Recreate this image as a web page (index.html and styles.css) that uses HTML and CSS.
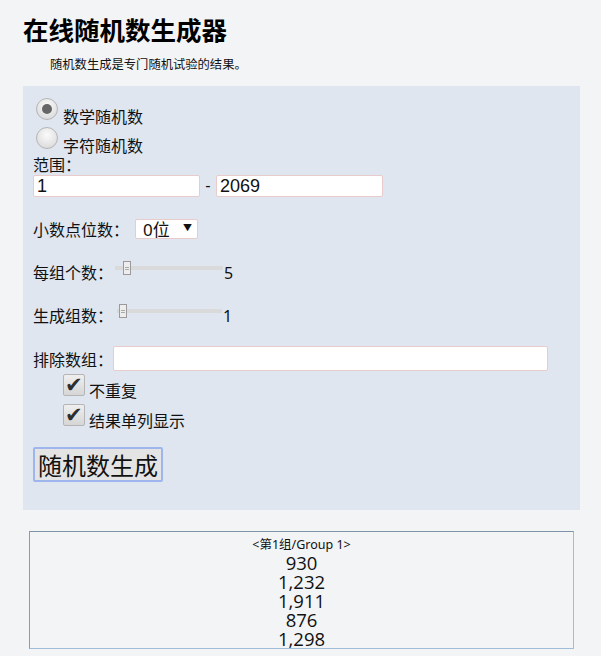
FILE: index.html
```html
<!DOCTYPE html>
<html lang="zh-CN">
<head>
    <meta charset="UTF-8">
    <title>在线随机数生成器</title>
    <link rel="stylesheet" href="styles.css">
</head>
<body>
    <h1>在线随机数生成器</h1>
    <p class="desc">随机数生成是专门随机试验的结果。</p>

    <div class="panel">
        <label class="radio-row"><input type="radio" name="kind" class="radio" checked>数学随机数</label>
        <label class="radio-row"><input type="radio" name="kind" class="radio">字符随机数</label>
        <div class="range-label">范围：</div>
        <div class="range">
            <input type="text" class="text-in" value="1">
            <span class="dash">-</span>
            <input type="text" class="text-in" value="2069">
        </div>

        <div class="row">
            <span class="label">小数点位数：</span>
            <span class="select">0位 <span class="arrow">▼</span></span>
        </div>
        <div class="row">
            <span class="label">每组个数：</span>
            <span class="slider"><span class="thumb thumb-a"></span></span>
            <span class="val">5</span>
        </div>
        <div class="row">
            <span class="label">生成组数：</span>
            <span class="slider slider-b"><span class="thumb thumb-b"></span></span>
            <span class="val">1</span>
        </div>
        <div class="row exclude">
            <span class="label">排除数组：</span>
            <input type="text" class="text-in wide">
        </div>
        <label class="check-row"><span class="box">✔</span>不重复</label>
        <label class="check-row"><span class="box">✔</span>结果单列显示</label>

        <button class="go">随机数生成</button>
    </div>

    <div class="result">
        <div class="group-title">&lt;第1组/Group 1&gt;</div>
        <div class="num">930</div>
        <div class="num">1,232</div>
        <div class="num">1,911</div>
        <div class="num">876</div>
        <div class="num">1,298</div>
    </div>
</body>
</html>
```

FILE: styles.css
```css
body {
    margin: 0;
    padding: 0 21px 0 23px;
    background: #f3f4f6;
    color: #111;
    font-family: "Noto Sans", "Noto Sans CJK SC", sans-serif;
}
h1 {
    margin: 0;
    padding-top: 13px;
    font-size: 25.5px;
    line-height: 34px;
    font-weight: bold;
    color: #000;
}
.desc {
    margin: 9px 0 0 27px;
    font-size: 12.3px;
    line-height: 18px;
}
.panel {
    margin-top: 12px;
    background: #e0e6ef;
    padding: 12px 10px 28px 10px;
    font-size: 16px;
}
.radio-row {
    display: flex;
    align-items: flex-end;
    height: 29px;
    padding-left: 3px;
    line-height: 20px;
}
.radio {
    appearance: none;
    align-self: flex-start;
    width: 22px;
    height: 22px;
    margin: 0 5px 0 0;
    border-radius: 50%;
    border: 1px solid #b5b5b5;
    background: radial-gradient(circle at 50% 35%, #fbfbfb, #d4d4d4);
    position: relative;
}
.radio:checked::after {
    content: "";
    position: absolute;
    left: 5px;
    top: 5px;
    width: 10px;
    height: 10px;
    border-radius: 50%;
    background: #666;
}
.range-label {
    line-height: 18px;
}
.range {
    display: flex;
    align-items: center;
    margin-top: 1px;
}
.text-in {
    box-sizing: border-box;
    width: 167px;
    height: 22px;
    border: 1px solid #e8cccc;
    border-radius: 2px;
    background: #fff;
    padding: 0 3px;
    font: 18px "Liberation Sans", Arial, sans-serif;
    color: #111;
    outline: none;
}
.dash {
    width: 16px;
    text-align: center;
    font-family: "Liberation Sans", sans-serif;
}
.row {
    display: flex;
    align-items: center;
    margin-top: 20px;
    height: 23px;
}
.row + .row {
    margin-top: 20px;
}
.label {
    margin-right: 2px;
}
.select {
    box-sizing: border-box;
    display: inline-block;
    width: 63px;
    height: 20px;
    margin-left: 4px;
    padding-left: 7px;
    border: 1px solid #e8cccc;
    border-radius: 2px;
    background: #fff;
    line-height: 20px;
    font-size: 17px;
    position: relative;
}
.arrow {
    position: absolute;
    right: 5px;
    top: -2px;
    font-size: 9px;
}
.slider {
    position: relative;
    width: 108px;
    height: 4px;
    background: #dadada;
    margin-top: -7px;
}
.slider-b {
    width: 105px;
    margin-left: 2px;
}
.thumb {
    position: absolute;
    top: -5px;
    width: 8px;
    height: 14px;
    border: 1px solid #9a9a9a;
    background: #ededed;
    box-sizing: border-box;
}
.thumb::after {
    content: "";
    position: absolute;
    left: 1px;
    top: 5px;
    width: 4px;
    height: 1px;
    border-top: 1px solid #aaa;
    border-bottom: 1px solid #aaa;
}
.thumb-a {
    left: 8px;
}
.thumb-b {
    left: 2px;
}
.val {
    margin-left: 1px;
    font-size: 16px;
    padding-top: 2px;
}
.exclude {
    margin-top: 17px;
    height: 25px;
}
.exclude .label {
    margin-right: 0;
}
.wide {
    width: 435px;
    height: 25px;
}
.check-row {
    display: flex;
    align-items: flex-end;
    padding-left: 30px;
    height: 30px;
    line-height: 20px;
}
.check-row:first-of-type {
    margin-top: 2px;
}
.box {
    box-sizing: border-box;
    align-self: flex-start;
    margin-top: 3px;
    width: 22px;
    height: 22px;
    margin-right: 4px;
    border: 1px solid #b5b5b5;
    border-radius: 2px;
    background: linear-gradient(#efefef, #d6d6d6);
    color: #2e2e2e;
    font-size: 21px;
    line-height: 19px;
    text-align: center;
}
.go {
    margin-top: 16px;
    height: 35px;
    padding: 0 3px;
    border: 2px solid #9eb5ee;
    border-radius: 2px;
    background: #e4e4e4;
    color: #111;
    font-size: 24px;
    font-family: "Noto Sans CJK SC", sans-serif;
    line-height: 30px;
}
.result {
    margin: 21px 6px 0 6px;
    border: 1px solid #a0bcd8;
    border-top-color: #7f92a8;
    border-left-color: #8a9bb0;
    text-align: center;
    height: 118px;
    overflow: hidden;
    padding-top: 5px;
    box-sizing: border-box;
}
.group-title {
    font-size: 12.5px;
    line-height: 16px;
}
.num {
    font-size: 18.5px;
    line-height: 19px;
    font-family: "Open Sans", "Noto Sans", sans-serif;
}
```
